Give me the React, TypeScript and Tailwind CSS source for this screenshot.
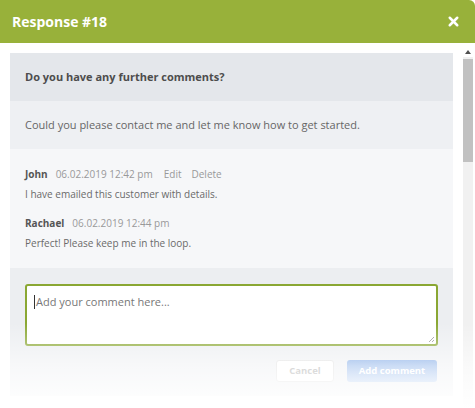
import { X } from "lucide-react";

const comments = [
  { author: "John", date: "06.02.2019 12:42 pm", text: "I have emailed this customer with details.", own: true },
  { author: "Rachael", date: "06.02.2019 12:44 pm", text: "Perfect! Please keep me in the loop.", own: false },
];

export default function App() {
  return (
    <div
      className="relative h-[408px] w-[475px] overflow-hidden bg-white"
      style={{ fontFamily: '"Open Sans", "Noto Sans", sans-serif' }}
    >
      <div className="flex h-[43px] items-center justify-between rounded-tr-[6px] bg-[#98b13a] pl-[12px] pr-[14px]">
        <h1 className="text-[14px] font-bold text-white">Response #18</h1>
        <X className="h-[15px] w-[15px] text-white" strokeWidth={4} />
      </div>

      <div className="flex">
        <div className="flex-1 pl-[10px] pr-[10px] pt-[10px]">
          <div className="flex h-[48px] items-center bg-[#e4e7eb] px-[15px]">
            <p className="text-[11px] font-bold text-[#4d4d4d]">Do you have any further comments?</p>
          </div>
          <div className="flex h-[48px] items-center bg-[#eef0f3] px-[15px]">
            <p className="text-[11px] text-[#666]">Could you please contact me and let me know how to get started.</p>
          </div>

          <div className="flex h-[119px] flex-col gap-[13px] bg-[#f6f7f9] px-[15px] pt-[17px]">
            {comments.map((c) => (
              <div key={c.author} className="flex flex-col gap-[4px]">
                <div className="flex items-center gap-[8px] text-[10px] leading-[16px]">
                  <span className="font-bold text-[#555]">{c.author}</span>
                  <span className="text-[#999]">{c.date}</span>
                  {c.own ? (
                    <>
                      <span className="ml-[3px] text-[#999]">Edit</span>
                      <span className="ml-[2px] text-[#999]">Delete</span>
                    </>
                  ) : null}
                </div>
                <p className="text-[10px] leading-[16px] text-[#6a6a6a]">{c.text}</p>
              </div>
            ))}
          </div>

          <div className="bg-[#eceef1] px-[15px] pb-[14px] pt-[16px]">
            <div className="relative h-[62px] rounded-[3px] border-2 border-[#8aa733] bg-white px-[7px] py-[8px]">
              <div className="flex items-center">
                <span className="mr-[1px] h-[14px] w-[1px] bg-[#333]" />
                <span className="text-[11px] text-[#777]">Add your comment here...</span>
              </div>
              <svg className="absolute bottom-[1px] right-[1px]" width="7" height="7" viewBox="0 0 7 7">
                <path d="M6 1L1 6M6 4L4 6" stroke="#999" strokeWidth="1" />
              </svg>
            </div>
            <div className="mt-[14px] flex justify-end gap-[13px] pr-[1px]">
              <button className="h-[22px] w-[58px] rounded-[3px] border border-[#dcdcdc] bg-white text-[9.5px] font-bold text-[#999]">
                Cancel
              </button>
              <button className="h-[22px] w-[90px] rounded-[3px] bg-gradient-to-b from-[#6e9de2] to-[#a9c6f0] text-[9.5px] font-bold text-white">
                Add comment
              </button>
            </div>
          </div>
        </div>

        <div className="mr-[2px] mt-[4px] flex h-[400px] w-[10px] flex-col bg-[#f1f1f1]">
          <div className="flex h-[10px] items-center justify-center bg-white">
            <svg width="6" height="4" viewBox="0 0 6 4">
              <path d="M3 0L6 4H0Z" fill="#505050" />
            </svg>
          </div>
          <div className="mt-[2px] h-[103px] w-full bg-[#c1c1c1]" />
        </div>
      </div>

      <div className="pointer-events-none absolute inset-x-0 bottom-0 h-[85px] bg-gradient-to-b from-white/0 via-white/60 to-white" />
    </div>
  );
}
